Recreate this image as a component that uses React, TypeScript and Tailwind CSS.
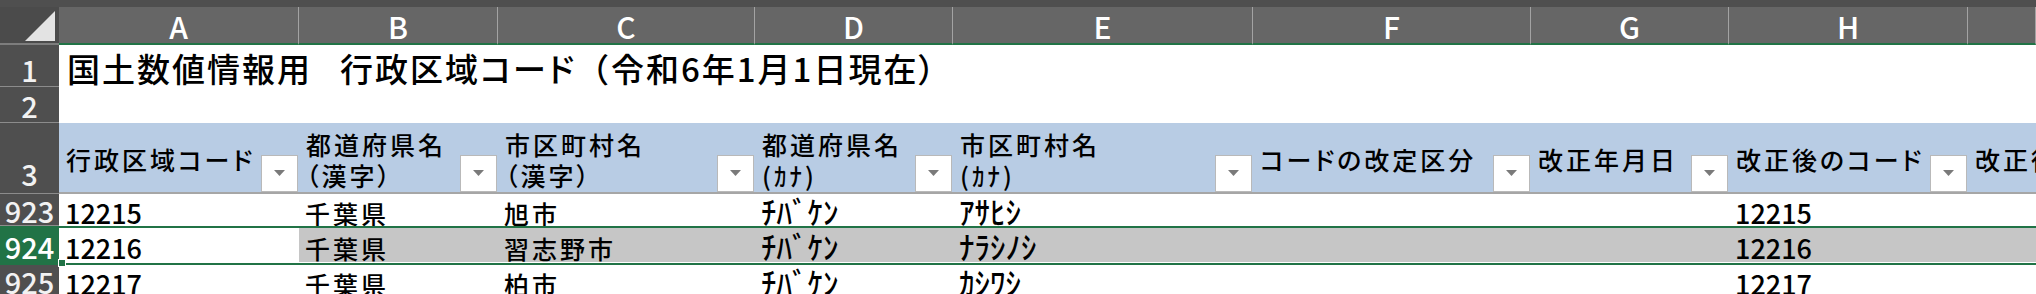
import clsx from 'clsx'

const COLS = [
  { key: 'A', w: 'w-[240px]' },
  { key: 'B', w: 'w-[199px]' },
  { key: 'C', w: 'w-[257px]' },
  { key: 'D', w: 'w-[198px]' },
  { key: 'E', w: 'w-[300px]' },
  { key: 'F', w: 'w-[278px]' },
  { key: 'G', w: 'w-[198px]' },
  { key: 'H', w: 'w-[239px]' },
  { key: '', w: 'w-[68px]' }
]

const HEADERS: { lines: string[]; filter: boolean }[] = [
  { lines: ['行政区域コード'], filter: true },
  { lines: ['都道府県名', '（漢字）'], filter: true },
  { lines: ['市区町村名', '（漢字）'], filter: true },
  { lines: ['都道府県名', '(ｶﾅ)'], filter: true },
  { lines: ['市区町村名', '(ｶﾅ)'], filter: true },
  { lines: ['コードの改定区分'], filter: true },
  { lines: ['改正年月日'], filter: true },
  { lines: ['改正後のコード'], filter: true },
  { lines: ['改正後の名称'], filter: false }
]

// column kind: n = digits, k = kanji, h = half-width kana
const KIND = ['n', 'k', 'k', 'h', 'h', 'k', 'k', 'n', 'k']

const ROWS = [
  { n: '923', cells: ['12215', '千葉県', '旭市', 'ﾁﾊﾞｹﾝ', 'ｱｻﾋｼ', '', '', '12215', ''] },
  { n: '924', cells: ['12216', '千葉県', '習志野市', 'ﾁﾊﾞｹﾝ', 'ﾅﾗｼﾉｼ', '', '', '12216', ''] },
  { n: '925', cells: ['12217', '千葉県', '柏市', 'ﾁﾊﾞｹﾝ', 'ｶｼﾜｼ', '', '', '12217', ''] }
]

const RowHead: React.FC<{ n: string; className?: string }> = ({ n, className }) => (
  <div
    className={clsx(
      'flex w-[59px] shrink-0 items-end justify-center border-b border-[#8c8c8c] bg-[#4f4f4f] text-[29px] leading-none text-[#f2f2f2]',
      className
    )}
  >
    {n}
  </div>
)

const FilterButton: React.FC = () => (
  <div className="mr-[1px] flex h-[37px] w-[37px] shrink-0 items-center justify-center self-end border border-[#b9b9b9] bg-white">
    <svg width="11" height="6" viewBox="0 0 11 6" className="mt-[-1px]">
      <path d="M0 0h11L5.5 6z" fill="#7a7a7a" />
    </svg>
  </div>
)

const BodyCells: React.FC<{ cells: string[]; selected?: boolean }> = ({ cells, selected }) => (
  <>
    {cells.map((text, i) => (
      <div
        key={i}
        className={clsx(
          COLS[i].w,
          'flex shrink-0 items-end whitespace-nowrap pl-[6px] leading-none text-black',
          KIND[i] === 'n' && 'text-[27px]',
          KIND[i] === 'k' && 'text-[25px] tracking-[3px]',
          KIND[i] === 'h' && 'text-[31px]',
          selected && i > 0 ? 'bg-[#c6c6c6]' : 'bg-white',
          selected && 'pb-[1px]'
        )}
      >
        {text}
      </div>
    ))}
  </>
)

export default function App() {
  return (
    <div className="h-[294px] w-[2036px] overflow-hidden bg-white font-['Noto_Sans_CJK_JP','Noto_Sans',sans-serif] font-medium [font-feature-settings:'palt']">
      {/* top strip */}
      <div className="h-[7px] bg-[#4f4f4f]" />

      {/* column letters */}
      <div className="flex h-[38px]">
        <div className="flex w-[59px] shrink-0 items-end justify-end border-b-2 border-[#7d7d7d] bg-[#4b4b4b] pb-[1px] pr-[3px]">
          <svg width="31" height="31" viewBox="0 0 31 31">
            <path d="M0 30h30V0z" fill="#e3e3e3" />
          </svg>
        </div>
        {COLS.map((c, i) => (
          <div
            key={i}
            className={clsx(
              c.w,
              'flex shrink-0 items-end justify-center border-b-2 border-r border-[#a3a3a3] border-b-[#217346] bg-[#666666] pb-[2px] text-[30px] leading-none text-white'
            )}
          >
            {c.key}
          </div>
        ))}
      </div>

      {/* row 1: title */}
      <div className="flex h-[42px]">
        <RowHead n="1" className="pb-[2px]" />
        <div className="flex flex-1 items-end whitespace-nowrap pb-[2px] pl-[8px] text-[33px] leading-none tracking-[2px] text-black">
          <span>国土数値情報用</span>
          <span className="inline-block w-[28px]" />
          <span>行政区域コード</span>
          <span className="[font-feature-settings:normal]">（</span>
          <span>令和6年1月1日現在）</span>
        </div>
      </div>

      {/* row 2 */}
      <div className="flex h-[36px]">
        <RowHead n="2" className="pb-[2px]" />
        <div className="flex-1" />
      </div>

      {/* row 3: table header */}
      <div className="flex h-[71px]">
        <RowHead n="3" className="pb-[5px]" />
        <div className="flex flex-1 flex-col">
          <div className="flex h-[69px] bg-[#b8cce4]">
            {HEADERS.map((h, i) => (
              <div key={i} className={clsx(COLS[i].w, 'flex shrink-0 pl-[7px]')}>
                <div className="flex min-w-0 flex-1 flex-col justify-center whitespace-nowrap pt-[4px] text-[25px] leading-[31px] tracking-[3px] text-black">
                  {h.lines.map((l) => (
                    <span key={l}>{l}</span>
                  ))}
                </div>
                {h.filter && <FilterButton />}
              </div>
            ))}
          </div>
          <div className="h-[2px] bg-[#a6a6a6]" />
        </div>
      </div>

      {/* row 923 */}
      <div className="flex h-[32px]">
        <RowHead n={ROWS[0].n} className="text-[28px]" />
        <div className="flex flex-1">
          <BodyCells cells={ROWS[0].cells} />
        </div>
      </div>

      {/* row 924, selected */}
      <div className="flex h-[39px]">
        <RowHead n={ROWS[1].n} className="border-b-0 bg-[#217346] pb-[4px] text-[28px] text-white" />
        <div className="relative flex flex-1 flex-col">
          <div className="h-[2px] bg-[#217346]" />
          <div className="flex h-[34px]">
            <BodyCells cells={ROWS[1].cells} selected />
          </div>
          <div className="h-[1px] bg-white" />
          <div className="flex h-[2px]">
            <div className="w-[7px]" />
            <div className="flex-1 bg-[#217346]" />
          </div>
          <div className="absolute bottom-[-2px] left-[-1px] h-[8px] w-[8px] border border-white bg-[#217346]" />
        </div>
      </div>

      {/* row 925 */}
      <div className="flex h-[32px]">
        <RowHead n={ROWS[2].n} className="text-[28px]" />
        <div className="flex flex-1">
          <BodyCells cells={ROWS[2].cells} />
        </div>
      </div>
    </div>
  )
}
